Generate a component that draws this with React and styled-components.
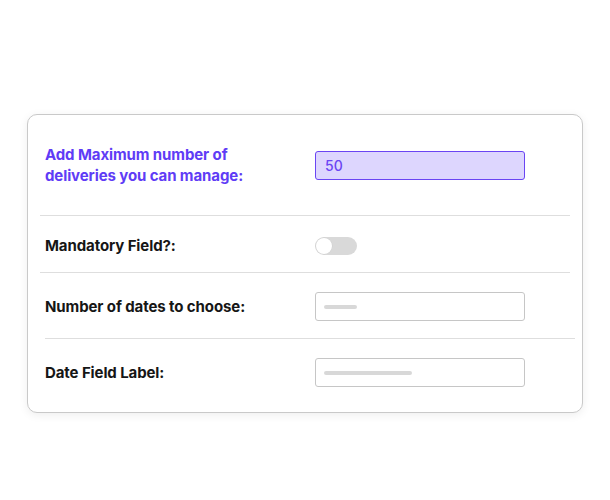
import React from "react";
import styled, { createGlobalStyle } from "styled-components";

const Global = createGlobalStyle`
  html, body { margin: 0; padding: 0; background: #ffffff; }
  body { font-family: Inter, "Noto Sans", sans-serif; }
  * { box-sizing: border-box; }
`;

const Page = styled.div`
  width: 610px;
  height: 500px;
  padding: 114px 0 0 27px;
`;

const Card = styled.div`
  width: 556px;
  height: 299px;
  border: 1px solid #c9c9c9;
  border-radius: 10px;
  background: #fff;
  box-shadow: 0 2px 10px rgba(0, 0, 0, 0.07);
  display: flex;
  flex-direction: column;
`;

const Row = styled.div`
  display: grid;
  grid-template-columns: 270px 210px;
  align-items: center;
  padding: ${(p) => p.$pad};
  padding-left: 17px;
`;

const Label = styled.div`
  font-size: 15px;
  font-weight: 700;
  line-height: 21px;
  color: ${(p) => (p.$accent ? "#5f3cf6" : "#161616")};
  max-width: ${(p) => (p.$accent ? "230px" : "none")};
  letter-spacing: -0.1px;
`;

const Divider = styled.div`
  height: 1px;
  background: #dedede;
  margin: 0 ${(p) => p.$right}px 0 ${(p) => p.$left}px;
`;

const Field = styled.div`
  height: 29px;
  border-radius: 3px;
  border: 1px solid ${(p) => (p.$active ? "#6a45f3" : "#c6c6c6")};
  background: ${(p) => (p.$active ? "#ddd6fe" : "#fff")};
  display: flex;
  align-items: center;
  padding-left: ${(p) => (p.$active ? "9px" : "8px")};
  font-size: 14px;
  font-weight: 500;
  color: #6a45f3;
`;

const Placeholder = styled.span`
  display: block;
  height: 4px;
  border-radius: 2px;
  background: #d8d8d8;
`;

const Toggle = styled.div`
  width: 42px;
  height: 18px;
  border-radius: 9px;
  background: #d9d9d9;
  padding: 1px;
`;

const Knob = styled.div`
  width: 16px;
  height: 16px;
  border-radius: 50%;
  background: #fff;
  box-shadow: 0 0 0 0.5px #cfcfcf;
`;

export default function App() {
  return (
    <>
      <Global />
      <Page>
        <Card>
          <Row $pad="29px 0 29px">
            <Label $accent>Add Maximum number of deliveries you can manage:</Label>
            <Field $active>50</Field>
          </Row>
          <Divider $left={12} $right={12} />
          <Row $pad="19px 0 16px">
            <Label>Mandatory Field?:</Label>
            <Toggle>
              <Knob />
            </Toggle>
          </Row>
          <Divider $left={12} $right={12} />
          <Row $pad="19px 0 17px">
            <Label>Number of dates to choose:</Label>
            <Field>
              <Placeholder style={{ width: 33 }} />
            </Field>
          </Row>
          <Divider $left={17} $right={7} />
          <Row $pad="19px 0 0">
            <Label>Date Field Label:</Label>
            <Field>
              <Placeholder style={{ width: 88 }} />
            </Field>
          </Row>
        </Card>
      </Page>
    </>
  );
}
